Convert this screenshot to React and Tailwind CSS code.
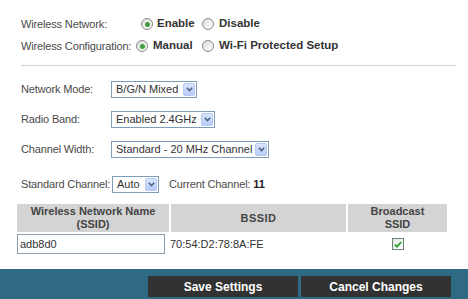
import React from "react";

function Radio({ checked }) {
    return (
        <span className="w-[12px] h-[12px] rounded-full border border-[#8a8a8a] bg-gradient-to-br from-[#dcdcdc] to-white flex items-center justify-center shrink-0">
            {checked && <span className="w-[5px] h-[5px] rounded-full bg-[#3f9d3f]" />}
        </span>
    );
}

function Select({ value, width }) {
    return (
        <div className={`h-[17px] border border-[#7f9db9] bg-white flex items-center justify-between pl-[4px] pr-px shrink-0 ${width}`}>
            <span className="text-[11px] text-[#333] leading-none whitespace-nowrap">{value}</span>
            <span className="w-[12px] h-[13px] rounded-[2px] border border-[#b3c8f2] bg-gradient-to-b from-[#dbe6fd] to-[#b7cbf7] flex items-center justify-center">
                <svg width="7" height="5" viewBox="0 0 7 5">
                    <path d="M0.8 0.8 L3.5 3.5 L6.2 0.8" fill="none" stroke="#4d6185" strokeWidth="1.6" />
                </svg>
            </span>
        </div>
    );
}

function FormRow({ label, children }) {
    return (
        <div className="flex items-center h-[17px]">
            <span className="w-[90px] shrink-0 whitespace-nowrap text-[11px] tracking-[-0.15px] text-[#4a4a4a]">{label}</span>
            {children}
        </div>
    );
}

export default function App() {
    return (
        <div className="w-[468px] h-[299px] flex flex-col bg-white font-['Liberation_Sans',Arial,sans-serif] overflow-hidden">
            <div className="pl-[21px] pt-[13px]">
                <div className="flex items-center h-[22px]">
                    <span className="w-[120px] shrink-0 whitespace-nowrap text-[11px] tracking-[-0.15px] text-[#4a4a4a]">Wireless Network:</span>
                    <div className="w-[61px] flex items-center gap-[4px]">
                        <Radio checked />
                        <span className="text-[11.5px] font-bold text-[#333]">Enable</span>
                    </div>
                    <div className="flex items-center gap-[5px]">
                        <Radio />
                        <span className="text-[11.5px] font-bold text-[#333]">Disable</span>
                    </div>
                </div>
                <div className="flex items-center h-[22px]">
                    <span className="w-[115px] shrink-0 whitespace-nowrap text-[11px] tracking-[-0.15px] text-[#4a4a4a]">Wireless Configuration:</span>
                    <div className="w-[66px] flex items-center gap-[5px]">
                        <Radio checked />
                        <span className="text-[11.5px] font-bold text-[#333]">Manual</span>
                    </div>
                    <div className="flex items-center gap-[5px]">
                        <Radio />
                        <span className="text-[11.5px] font-bold text-[#333]">Wi-Fi Protected Setup</span>
                    </div>
                </div>
                <div className="mt-[8px] w-[435px] border-t border-[#d2d2d2]" />

                <div className="mt-[15px] flex flex-col gap-[13px]">
                    <FormRow label="Network Mode:">
                        <Select value="B/G/N Mixed" width="w-[86px]" />
                    </FormRow>
                    <FormRow label="Radio Band:">
                        <Select value="Enabled 2.4GHz" width="w-[104px]" />
                    </FormRow>
                    <FormRow label="Channel Width:">
                        <Select value="Standard - 20 MHz Channel" width="w-[158px]" />
                    </FormRow>
                </div>

                <div className="mt-[18px] flex items-center h-[17px]">
                    <span className="w-[91px] shrink-0 whitespace-nowrap text-[11px] tracking-[-0.15px] text-[#4a4a4a]">Standard Channel:</span>
                    <Select value="Auto" width="w-[47px]" />
                    <span className="ml-[10px] whitespace-nowrap text-[11px] tracking-[-0.15px] text-[#4a4a4a]">
                        Current Channel: <span className="font-bold text-[#222]">11</span>
                    </span>
                </div>
            </div>

            <div className="ml-[17px] mt-[11px] w-[430px]">
                <div className="grid grid-cols-[152px_175px_99px] gap-x-[2px] h-[28px]">
                    <div className="bg-[#d4d4d4] flex items-center justify-center text-center text-[11px] leading-[13px] font-bold text-[#444]">
                        Wireless Network Name<br />(SSID)
                    </div>
                    <div className="bg-[#d4d4d4] flex items-center justify-center text-[11px] font-bold text-[#444] tracking-[0.5px]">
                        BSSID
                    </div>
                    <div className="bg-[#d4d4d4] flex items-center justify-center text-center text-[11px] leading-[13px] font-bold text-[#444]">
                        Broadcast<br />SSID
                    </div>
                </div>
                <div className="grid grid-cols-[152px_175px_99px] gap-x-[2px] h-[24px] items-center">
                    <div className="w-[148px] h-[20px] border border-[#8d9fb3] flex items-center pl-[2px] text-[11px] text-[#333]">
                        adb8d0
                    </div>
                    <div className="text-[11px] text-[#333] -ml-px">70:54:D2:78:8A:FE</div>
                    <div className="flex justify-center">
                        <span className="w-[12px] h-[12px] border border-[#6b8574] bg-gradient-to-br from-[#e4e8e4] to-white flex items-center justify-center">
                            <svg width="8" height="7" viewBox="0 0 8 7">
                                <path d="M0.8 3.6 L3 5.7 L7.2 1" fill="none" stroke="#27a127" strokeWidth="1.8" />
                            </svg>
                        </span>
                    </div>
                </div>
            </div>

            <div className="mt-auto h-[30px] bg-[#2f6a85] flex justify-end items-start pt-[7px] pr-[17px] gap-[3px]">
                <button className="w-[150px] h-[21px] bg-[#323232] text-white text-[12px] font-bold">Save Settings</button>
                <button className="w-[150px] h-[21px] bg-[#323232] text-white text-[12px] font-bold">Cancel Changes</button>
            </div>
        </div>
    );
}
